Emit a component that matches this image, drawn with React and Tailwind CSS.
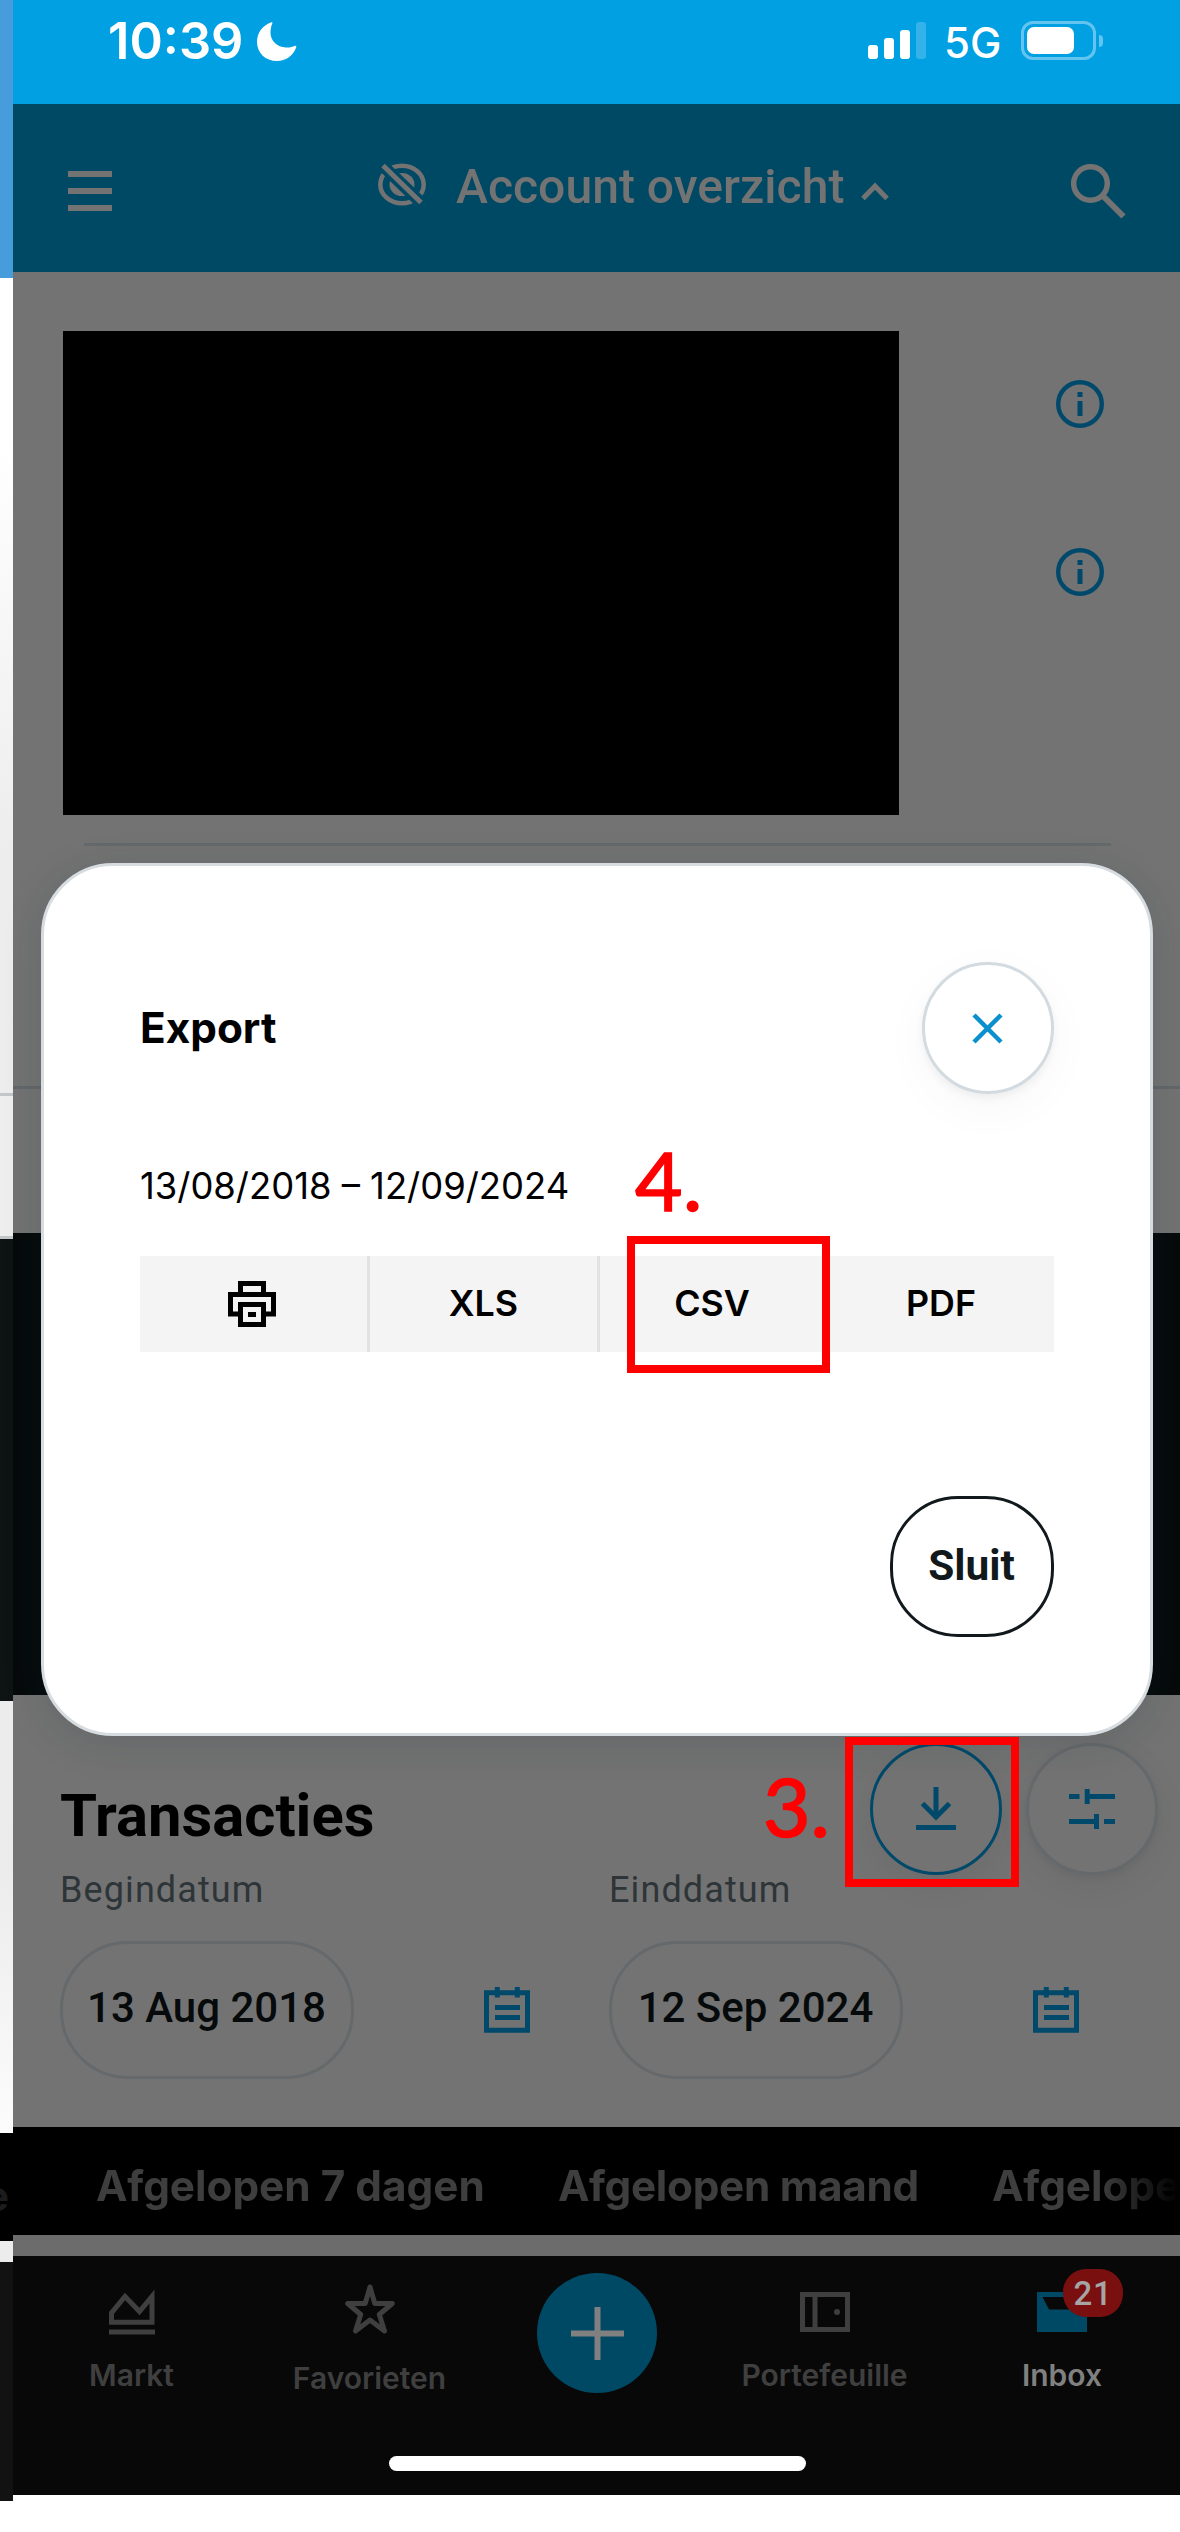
function Moon() {
  return (
    <svg width="40" height="39" viewBox="0 0 40 39" fill="#fff">
      <path d="M14.5 .3C6 3 0 10.5 0 20c0 11 8.500 19 20 19 8.500 0 16-5 19.200-13.500.5-1.300-.4-2-1.700-1.500C35.500 25 32.500 25.700 29 25.500 20 25 13.700 19 13.500 11c0-3.500.6-6.500 1.700-9.500.5-1.200.2-1.400-.7-1.200Z" />
    </svg>
  );
}

function HiddenEye() {
  return (
    <svg width="48" height="44" viewBox="0 0 48 44" fill="none">
      <ellipse cx="24" cy="21.500" rx="21.700" ry="18.800" stroke="#737373" strokeWidth="4.500" />
      <ellipse cx="24" cy="21.500" rx="12.500" ry="11.500" fill="#737373" />
      <path d="M1 -1 47 43.500" stroke="#004965" strokeWidth="12" />
      <path d="M5 2.500 43 39.500" stroke="#737373" strokeWidth="5" />
    </svg>
  );
}

function Info() {
  return (
    <svg width="48" height="48" viewBox="0 0 48 48" fill="none">
      <circle cx="24" cy="24" r="21.800" stroke="#00496a" strokeWidth="4.400" />
      <path d="M21.500 12h5v5h-5zM21.500 21h5v15h-5z" fill="#00496a" />
    </svg>
  );
}

function Printer() {
  return (
    <svg width="48" height="46" viewBox="0 0 48 46" fill="none" stroke="#000" strokeWidth="5">
      <path d="M12.500 13.500v-11h23v11M12.500 33h-10V13.500h43V33h-10" />
      <path d="M12.500 23.500h23v20h-23z" />
      <path d="M20 33.500h8" />
    </svg>
  );
}

function Calendar() {
  return (
    <svg width="46" height="46" viewBox="0 0 46 46" fill="none" stroke="#00496a" strokeWidth="5">
      <path d="M2.500 5.700h41V43.200h-41z" />
      <path d="M13.300 0v10.500M33.300 0v10.500M11 20.500h25M11 30.500h25" />
    </svg>
  );
}

function DateField({ label, value }) {
  return (
    <div className="w-[549px] shrink-0">
      <div className="pt-px text-[36px] leading-[36px] tracking-[1.1px] text-[#2e3538]">{label}</div>
      <div className="mt-[33px] flex items-center">
        <div className="flex h-[138px] w-[294px] items-center justify-center rounded-[68px] border-[3px] border-[#65696b] pr-px pb-[4px] text-[42px] leading-[42px] font-medium whitespace-nowrap text-[#060a0b]">
          {value}
        </div>
        <div className="ml-[130px]">
          <Calendar />
        </div>
      </div>
    </div>
  );
}

function NavItem({ width, label, active, low, children }) {
  return (
    <div className={`flex shrink-0 flex-col items-center ${width}`}>
      <div className="flex h-[104px] w-full justify-center">{children}</div>
      <div
        className={`font-[Inter] text-[30px] leading-[30px] font-semibold ${low ? "mt-[3px]" : ""} ${active ? "text-[#808080]" : "text-[#3f3f3f]"}`}
      >
        {label}
      </div>
    </div>
  );
}

function PreviousScreenEdge() {
  return (
    <div className="flex h-[2532px] w-[13px] shrink-0 flex-col overflow-hidden bg-white">
      <div className="h-[278px] bg-[#479ddb]" />
      <div className="h-[815px] bg-linear-to-b from-white from-20% to-[#ededed] to-70%" />
      <div className="h-[3px] bg-[#c3c7c9]" />
      <div className="h-[140px] bg-[#eeeeee]" />
      <div className="h-[3px] bg-[#c3c7c9]" />
      <div className="h-[462px] bg-[#0e1414]" />
      <div className="h-[432px] bg-linear-to-b from-[#ececec] from-40% to-[#fcfcfc]" />
      <div className="flex h-[108px] justify-end bg-black pt-[42px] pr-1">
        <span className="font-[Inter] text-[42px] leading-[42px] font-bold text-[#1c1c1c]">e</span>
      </div>
      <div className="h-[21px] bg-[#ececec]" />
      <div className="h-[239px] bg-[#121212]" />
    </div>
  );
}

function StatusBar() {
  return (
    <div className="flex h-[104px] items-start bg-[#00a0e3] pl-[95px] text-white">
      <span className="mt-4 w-[149px] font-[Inter] text-[50.6px] leading-[50px] font-semibold">10:39</span>
      <div className="mt-[22px]">
        <Moon />
      </div>
      <div className="mt-[22px] ml-[571px] flex h-[37px] items-end gap-[6px]">
        <i className="h-[14px] w-[10px] rounded-[3px] bg-white" />
        <i className="h-[21px] w-[10px] rounded-[3px] bg-white" />
        <i className="h-[29px] w-[10px] rounded-[3px] bg-white" />
        <i className="h-[37px] w-[10px] rounded-[3px] bg-[#33b3e9]" />
      </div>
      <span className="mt-[22px] ml-[18px] w-[77px] font-[Inter] text-[42px] leading-[42px] font-medium">5G</span>
      <div className="mt-[21px] flex items-center gap-[3px]">
        <div className="h-[39px] w-[75px] rounded-[12px] border-[3px] border-[#62c4ef] p-[3px]">
          <div className="h-[27px] w-[47px] rounded-[7px] bg-white" />
        </div>
        <div className="h-3 w-1 rounded-r-full bg-[#62c4ef]" />
      </div>
    </div>
  );
}

function Header() {
  return (
    <div className="flex h-[168px] items-start bg-[#004965]">
      <div className="mt-[67px] ml-[55px] flex w-[44px] flex-col gap-[11px]">
        <i className="h-[6px] bg-[#737373]" />
        <i className="h-[6px] bg-[#737373]" />
        <i className="h-[6px] bg-[#737373]" />
      </div>
      <div className="mt-[59px] ml-[266px]">
        <HiddenEye />
      </div>
      <span className="mt-[59px] ml-[30px] w-[405px] text-[48.1px] leading-[48px] font-medium whitespace-nowrap text-[#737373]">
        Account overzicht
      </span>
      <svg className="mt-[78px]" width="28" height="19" viewBox="0 0 28 19" fill="none" stroke="#737373" strokeWidth="5">
        <path d="M2 16.500 14 4.200 26 16.500" />
      </svg>
      <svg className="mt-[60px] ml-[182px]" width="55" height="55" viewBox="0 0 55 55" fill="none" stroke="#737373">
        <circle cx="19.500" cy="19.500" r="16.800" strokeWidth="5.500" />
        <path d="M31.500 31.500 52.500 52.500" strokeWidth="6" />
      </svg>
    </div>
  );
}

function ExportDialog() {
  return (
    <div className="absolute top-[863px] left-[41px] flex h-[873px] w-[1112px] flex-col rounded-[72px] border-[3px] border-[#d6dce0] bg-white px-24 font-[Inter] text-black shadow-[0_8px_40px_rgba(20,40,50,0.15)]">
      <div className="mt-24 flex h-[132px] items-start justify-between">
        <h2 className="mt-[45px] text-[42.300px] leading-[42px] font-bold">Export</h2>
        <button className="flex h-[132px] w-[132px] items-center justify-center rounded-full border-[3px] border-[#d3dbe0] bg-white shadow-[0_14px_50px_rgba(0,0,0,0.035),0_4px_8px_rgba(0,0,0,0.05)]">
          <svg className="mr-[2px]" width="31" height="31" viewBox="0 0 31 31" stroke="#0a8fcf" strokeWidth="4.500">
            <path d="M2 2 29 29M29 2 2 29" />
          </svg>
        </button>
      </div>
      <p className="mt-[74px] text-[36.4px] leading-[36px]">13/08/2018 – 12/09/2024</p>
      <div className="mt-[52px] grid h-24 w-[914px] grid-cols-[230px_230px_228px_226px] divide-x-[3px] divide-[#e2e2e2] bg-[#f4f4f4] text-[35.800px] leading-[36px] font-semibold">
        <div className="flex items-center justify-center pr-[3px] pb-[1px]">
          <Printer />
        </div>
        <div className="flex items-center justify-center pb-[2px]">XLS</div>
        <div className="flex items-center justify-center pr-[1px] pb-[2px]">CSV</div>
        <div className="flex items-center justify-center pb-[2px]">PDF</div>
      </div>
      <button className="mt-36 h-[141px] w-[164px] self-end rounded-[68px] border-[3px] border-[#11191c] pr-px pb-[2px] font-[Roboto] text-[42.400px] leading-[42px] font-bold text-[#11191c]">
        Sluit
      </button>
    </div>
  );
}

function Transactions() {
  return (
    <div className="h-[432px] pl-[47px]">
      <div className="flex h-[176px] items-start pt-12">
        <h2 className="mt-[43px] w-[810px] text-[59.800px] leading-[60px] font-bold text-black">Transacties</h2>
        <button className="flex h-[132px] w-[132px] items-center justify-center rounded-full border-[3px] border-[#00496a] shadow-[0_10px_36px_rgba(0,0,0,0.06)]">
          <svg width="40" height="44" viewBox="0 0 40 44" fill="none" stroke="#00496a" strokeWidth="5">
            <path d="M20 0v29M6.500 16.500 20 30l13.500-13.500M0 40.500h40" />
          </svg>
        </button>
        <button className="ml-[24px] flex h-[132px] w-[132px] shrink-0 items-center justify-center rounded-full border-[3px] border-[#65696b] shadow-[0_10px_36px_rgba(0,0,0,0.06),0_3px_6px_rgba(0,0,0,0.05)]">
          <svg className="mr-px" width="46" height="40" viewBox="0 0 46 40" fill="none" stroke="#00496a" strokeWidth="5">
            <path d="M0 7.500h10.500M18.200 0v15M18 7.500h28M0 32.500h26M27.500 25v15M35 32.500h11" />
          </svg>
        </button>
      </div>
      <div className="flex">
        <DateField label="Begindatum" value="13 Aug 2018" />
        <DateField label="Einddatum" value="12 Sep 2024" />
      </div>
    </div>
  );
}

function QuickRanges() {
  return (
    <div className="flex h-[108px] overflow-hidden bg-black mask-r-from-93% mask-r-to-100% pt-[38px] pl-[83px] font-[Inter] text-[42.300px] leading-[42px] font-bold whitespace-nowrap text-[#3e3e3e]">
      <span className="w-[462px] shrink-0">Afgelopen 7 dagen</span>
      <span className="w-[434px] shrink-0 tracking-[-0.3px]">Afgelopen maand</span>
      <span className="shrink-0">Afgelope</span>
    </div>
  );
}

function BottomNav() {
  return (
    <div className="h-[239px] bg-[#080808]">
      <div className="flex h-[200px]">
        <NavItem width="w-[237px]" label="Markt">
          <svg className="mt-[33px]" width="46" height="46" viewBox="0 0 46 46" fill="none" stroke="#3f3f3f" strokeWidth="5">
            <path d="M2.500 33.200V24L16 7.500 30.500 22.500 43 7.500v25.700zM0 43h46" />
          </svg>
        </NavItem>
        <NavItem width="w-[239px]" label="Favorieten" low>
          <svg className="mt-[27px]" width="50" height="52" viewBox="0 0 50 52" fill="none" stroke="#3f3f3f" strokeWidth="5" strokeLinejoin="round">
            <path d="M25 4 29.800 20.500H47.300L34.300 31.500 39.500 48 25 37 10.500 48 15.700 31.500 2.700 20.500H20.200Z" />
          </svg>
        </NavItem>
        <div className="flex w-[216px] justify-center pt-[17px]">
          <div className="flex h-[120px] w-[120px] items-center justify-center rounded-full bg-[#004965]">
            <svg width="53" height="53" viewBox="0 0 53 53" stroke="#808080" strokeWidth="6">
              <path d="M26.500 0v53M0 26.500h53" />
            </svg>
          </div>
        </div>
        <NavItem width="w-[239px]" label="Portefeuille">
          <svg className="mt-9" width="50" height="40" viewBox="0 0 50 40" fill="none" stroke="#3f3f3f" strokeWidth="5">
            <path d="M2.500 2.500h45v35h-45zM15 2.500v35" />
            <circle cx="37" cy="20" r="3" fill="#3f3f3f" stroke="none" />
          </svg>
        </NavItem>
        <NavItem width="w-[236px]" label="Inbox" active>
          <div className="relative mt-9 h-[40px] w-[50px]">
            <svg width="50" height="40" viewBox="0 0 50 40">
              <path d="M0 0h50v40H0z" fill="#004965" />
              <path d="M5.500 5h39l-6.500 12.500H12z" fill="#080808" />
            </svg>
            <div className="absolute -top-[23px] left-[26px] flex h-[48px] w-[60px] items-center justify-center rounded-[23px] bg-[#7a0f0f] text-[33px] leading-[33px] font-medium tracking-[0.8px] text-[#a5a5a5]">
              21
            </div>
          </div>
        </NavItem>
      </div>
      <div className="ml-[376px] h-[15px] w-[417px] rounded-full bg-white" />
    </div>
  );
}

function Annotations() {
  return (
    <>
      <div className="absolute top-[1236px] left-[627px] h-[137px] w-[203px] border-8 border-[#ff0000]" />
      <div className="absolute top-[1138px] left-[635px] font-[Lato] text-[82px] leading-[82px] tracking-[0.5px] text-[#ff0000] [-webkit-text-stroke:1.6px_#ff0000]">
        4.
      </div>
      <div className="absolute top-[1737px] left-[845px] h-[150px] w-[174px] border-8 border-[#ff0000]" />
      <div className="absolute top-[1764px] left-[763px] font-[Lato] text-[82px] leading-[82px] text-[#ff0000] [-webkit-text-stroke:1.6px_#ff0000]">
        3.
      </div>
    </>
  );
}

export default function App() {
  return (
    <div className="relative flex h-[2532px] w-[1180px] overflow-hidden bg-white font-[Roboto,sans-serif]">
      <PreviousScreenEdge />
      <div className="flex w-[1167px] shrink-0 flex-col">
        <StatusBar />
        <Header />
        <div className="h-[961px] bg-[#737373] pt-[59px]">
          <div className="flex h-[484px] pl-[50px]">
            <div className="w-[836px] bg-black" />
            <div className="mt-[49px] ml-[157px] flex flex-col gap-[120px]">
              <Info />
              <Info />
            </div>
          </div>
          <div className="mt-[28px] ml-[71px] h-[3px] w-[1027px] bg-[#64696c]" />
          <div className="mt-[240px] h-[3px] bg-[#62676a]" />
        </div>
        <div className="h-[462px] bg-[#060a0b]" />
        <div className="bg-[#737373]">
          <Transactions />
        </div>
        <div className="bg-black">
          <QuickRanges />
        </div>
        <div className="h-[21px] bg-[#6c6c6c]" />
        <BottomNav />
      </div>
      <ExportDialog />
      <Annotations />
    </div>
  );
}
